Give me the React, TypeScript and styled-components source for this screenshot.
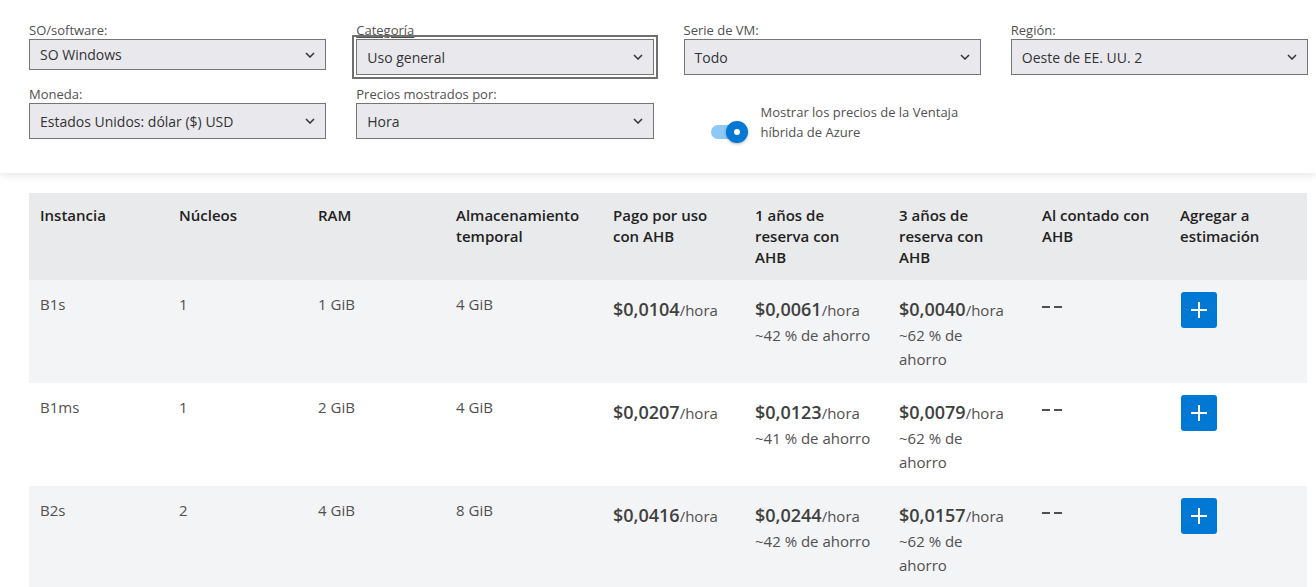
import styled, { createGlobalStyle } from "styled-components";

const GlobalStyle = createGlobalStyle`
  body {
    margin: 0;
    background: #fff;
    font-family: "Segoe UI", "Open Sans", "Noto Sans", sans-serif;
    color: #505050;
  }
`;

const Page = styled.div`
  width: 1316px;
  height: 587px;
  overflow: hidden;
`;

const FilterPanel = styled.div`
  display: grid;
  grid-template-columns: repeat(4, 1fr);
  column-gap: 30px;
  row-gap: 10px;
  align-items: start;
  padding: 21px 8px 31px 29px;
  background: #fff;
  box-shadow: 0 3px 7px rgba(0, 0, 0, 0.09);
  position: relative;
`;

const Field = styled.div`
  display: flex;
  flex-direction: column;
`;

const Label = styled.label<{ $underline?: boolean }>`
  font-size: 13px;
  line-height: 18px;
  color: #505050;
  text-decoration: ${(p) => (p.$underline ? "underline" : "none")};
  text-underline-offset: 2px;
`;

const SelectBox = styled.div<{ $height: number; $focused?: boolean }>`
  display: flex;
  align-items: center;
  justify-content: space-between;
  box-sizing: border-box;
  height: ${(p) => p.$height}px;
  padding: 0 10px 0 10px;
  background: #e9e9ed;
  border: 1px solid #767676;
  font-size: 14px;
  color: #333;
  outline: ${(p) => (p.$focused ? "2px solid #707070" : "none")};
  outline-offset: 2px;
`;

const Chevron = () => (
  <svg width="10" height="6" viewBox="0 0 10 6">
    <path d="M1 1l4 4 4-4" fill="none" stroke="#333" strokeWidth="1.5" />
  </svg>
);

const ToggleField = styled.div`
  display: flex;
  align-items: flex-end;
  gap: 13px;
  padding: 17px 0 0 27px;
`;

const Switch = styled.div`
  position: relative;
  width: 37px;
  height: 22px;
  flex-shrink: 0;
  margin-bottom: -1px;
`;

const Track = styled.div`
  position: absolute;
  left: 0;
  top: 4px;
  width: 30px;
  height: 14px;
  border-radius: 7px;
  background: #8ec8f7;
`;

const Thumb = styled.div`
  position: absolute;
  right: 0;
  top: 0;
  width: 22px;
  height: 22px;
  border-radius: 50%;
  background: #0078d4;
  box-shadow: 0 1px 3px rgba(0, 0, 0, 0.3);
  display: flex;
  align-items: center;
  justify-content: center;
  &::after {
    content: "";
    width: 6px;
    height: 6px;
    border-radius: 50%;
    background: #fff;
  }
`;

const ToggleText = styled.div`
  font-size: 13px;
  line-height: 20px;
  color: #505050;
  width: 220px;
`;

const TableWrap = styled.div`
  padding: 20px 9px 0 29px;
`;

const Table = styled.table`
  width: 100%;
  border-collapse: collapse;
  table-layout: fixed;
`;

const Th = styled.th`
  background: #e9eaec;
  text-align: left;
  vertical-align: top;
  font-size: 15px;
  line-height: 21px;
  font-weight: 600;
  color: #222;
  padding: 12px 18px 12px 11px;
  height: 63px;
`;

const Row = styled.tr<{ $shaded?: boolean }>`
  background: ${(p) => (p.$shaded ? "#f3f4f6" : "#fff")};
`;

const Td = styled.td`
  vertical-align: top;
  padding: 12px 11px 12px 11px;
  font-size: 15px;
  line-height: 24px;
  color: #505050;
  height: 78px;
`;

const Price = styled.div`
  line-height: 26px;
  white-space: nowrap;
  margin-top: 4px;
`;

const Amount = styled.span`
  font-size: 18px;
  font-weight: 600;
  color: #404040;
`;

const Unit = styled.span`
  font-size: 15px;
`;

const Saving = styled.div<{ $narrow?: boolean }>`
  font-size: 15px;
  line-height: 24px;
  max-width: ${(p) => (p.$narrow ? "100px" : "none")};
`;

const Dashes = styled.div`
  display: flex;
  gap: 4px;
  padding-top: 14px;
  & span {
    width: 8px;
    height: 1.5px;
    background: #505050;
  }
`;

const AddButton = styled.button`
  width: 36px;
  height: 36px;
  margin: 0 0 0 1px;
  border: none;
  border-radius: 3px;
  background: #0078d4;
  display: flex;
  align-items: center;
  justify-content: center;
  padding: 0;
`;

const PlusIcon = () => (
  <svg width="18" height="18" viewBox="0 0 18 18">
    <path d="M9 1v16M1 9h16" stroke="#fff" strokeWidth="2" />
  </svg>
);

const columns = [139, 139, 138, 157, 142, 144, 143, 138, 138];
const headers = [
  "Instancia",
  "Núcleos",
  "RAM",
  "Almacenamiento temporal",
  "Pago por uso con AHB",
  "1 años de reserva con AHB",
  "3 años de reserva con AHB",
  "Al contado con AHB",
  "Agregar a estimación",
];

interface IRow {
  name: string;
  cores: string;
  ram: string;
  storage: string;
  payg: string;
  one: string;
  oneSave: string;
  three: string;
  threeSave: string;
}

const rows: IRow[] = [
  { name: "B1s", cores: "1", ram: "1 GiB", storage: "4 GiB", payg: "$0,0104", one: "$0,0061", oneSave: "~42 % de ahorro", three: "$0,0040", threeSave: "~62 % de ahorro" },
  { name: "B1ms", cores: "1", ram: "2 GiB", storage: "4 GiB", payg: "$0,0207", one: "$0,0123", oneSave: "~41 % de ahorro", three: "$0,0079", threeSave: "~62 % de ahorro" },
  { name: "B2s", cores: "2", ram: "4 GiB", storage: "8 GiB", payg: "$0,0416", one: "$0,0244", oneSave: "~42 % de ahorro", three: "$0,0157", threeSave: "~62 % de ahorro" },
];

function PriceCell({ amount, saving, narrow }: { amount: string; saving?: string; narrow?: boolean }) {
  return (
    <Td>
      <Price>
        <Amount>{amount}</Amount>
        <Unit>/hora</Unit>
      </Price>
      {saving && <Saving $narrow={narrow}>{saving}</Saving>}
    </Td>
  );
}

export default function App() {
  return (
    <Page>
      <GlobalStyle />
      <FilterPanel>
        <Field>
          <Label>SO/software:</Label>
          <SelectBox $height={31}>
            SO Windows <Chevron />
          </SelectBox>
        </Field>
        <Field>
          <Label $underline>Categoría</Label>
          <SelectBox $height={36} $focused>
            Uso general <Chevron />
          </SelectBox>
        </Field>
        <Field>
          <Label>Serie de VM:</Label>
          <SelectBox $height={36}>
            Todo <Chevron />
          </SelectBox>
        </Field>
        <Field>
          <Label>Región:</Label>
          <SelectBox $height={36}>
            Oeste de EE. UU. 2 <Chevron />
          </SelectBox>
        </Field>
        <Field>
          <Label>Moneda:</Label>
          <SelectBox $height={36}>
            Estados Unidos: dólar ($) USD <Chevron />
          </SelectBox>
        </Field>
        <Field>
          <Label>Precios mostrados por:</Label>
          <SelectBox $height={36}>
            Hora <Chevron />
          </SelectBox>
        </Field>
        <ToggleField>
          <Switch>
            <Track />
            <Thumb />
          </Switch>
          <ToggleText>Mostrar los precios de la Ventaja híbrida de Azure</ToggleText>
        </ToggleField>
      </FilterPanel>

      <TableWrap>
        <Table>
          <colgroup>
            {columns.map((w, i) => (
              <col key={i} style={{ width: w }} />
            ))}
          </colgroup>
          <thead>
            <tr>
              {headers.map((h) => (
                <Th key={h}>{h}</Th>
              ))}
            </tr>
          </thead>
          <tbody>
            {rows.map((r, i) => (
              <Row key={r.name} $shaded={i % 2 === 0}>
                <Td>{r.name}</Td>
                <Td>{r.cores}</Td>
                <Td>{r.ram}</Td>
                <Td>{r.storage}</Td>
                <PriceCell amount={r.payg} />
                <PriceCell amount={r.one} saving={r.oneSave} />
                <PriceCell amount={r.three} saving={r.threeSave} narrow />
                <Td>
                  <Dashes>
                    <span />
                    <span />
                  </Dashes>
                </Td>
                <Td>
                  <AddButton aria-label="Agregar">
                    <PlusIcon />
                  </AddButton>
                </Td>
              </Row>
            ))}
          </tbody>
        </Table>
      </TableWrap>
    </Page>
  );
}
